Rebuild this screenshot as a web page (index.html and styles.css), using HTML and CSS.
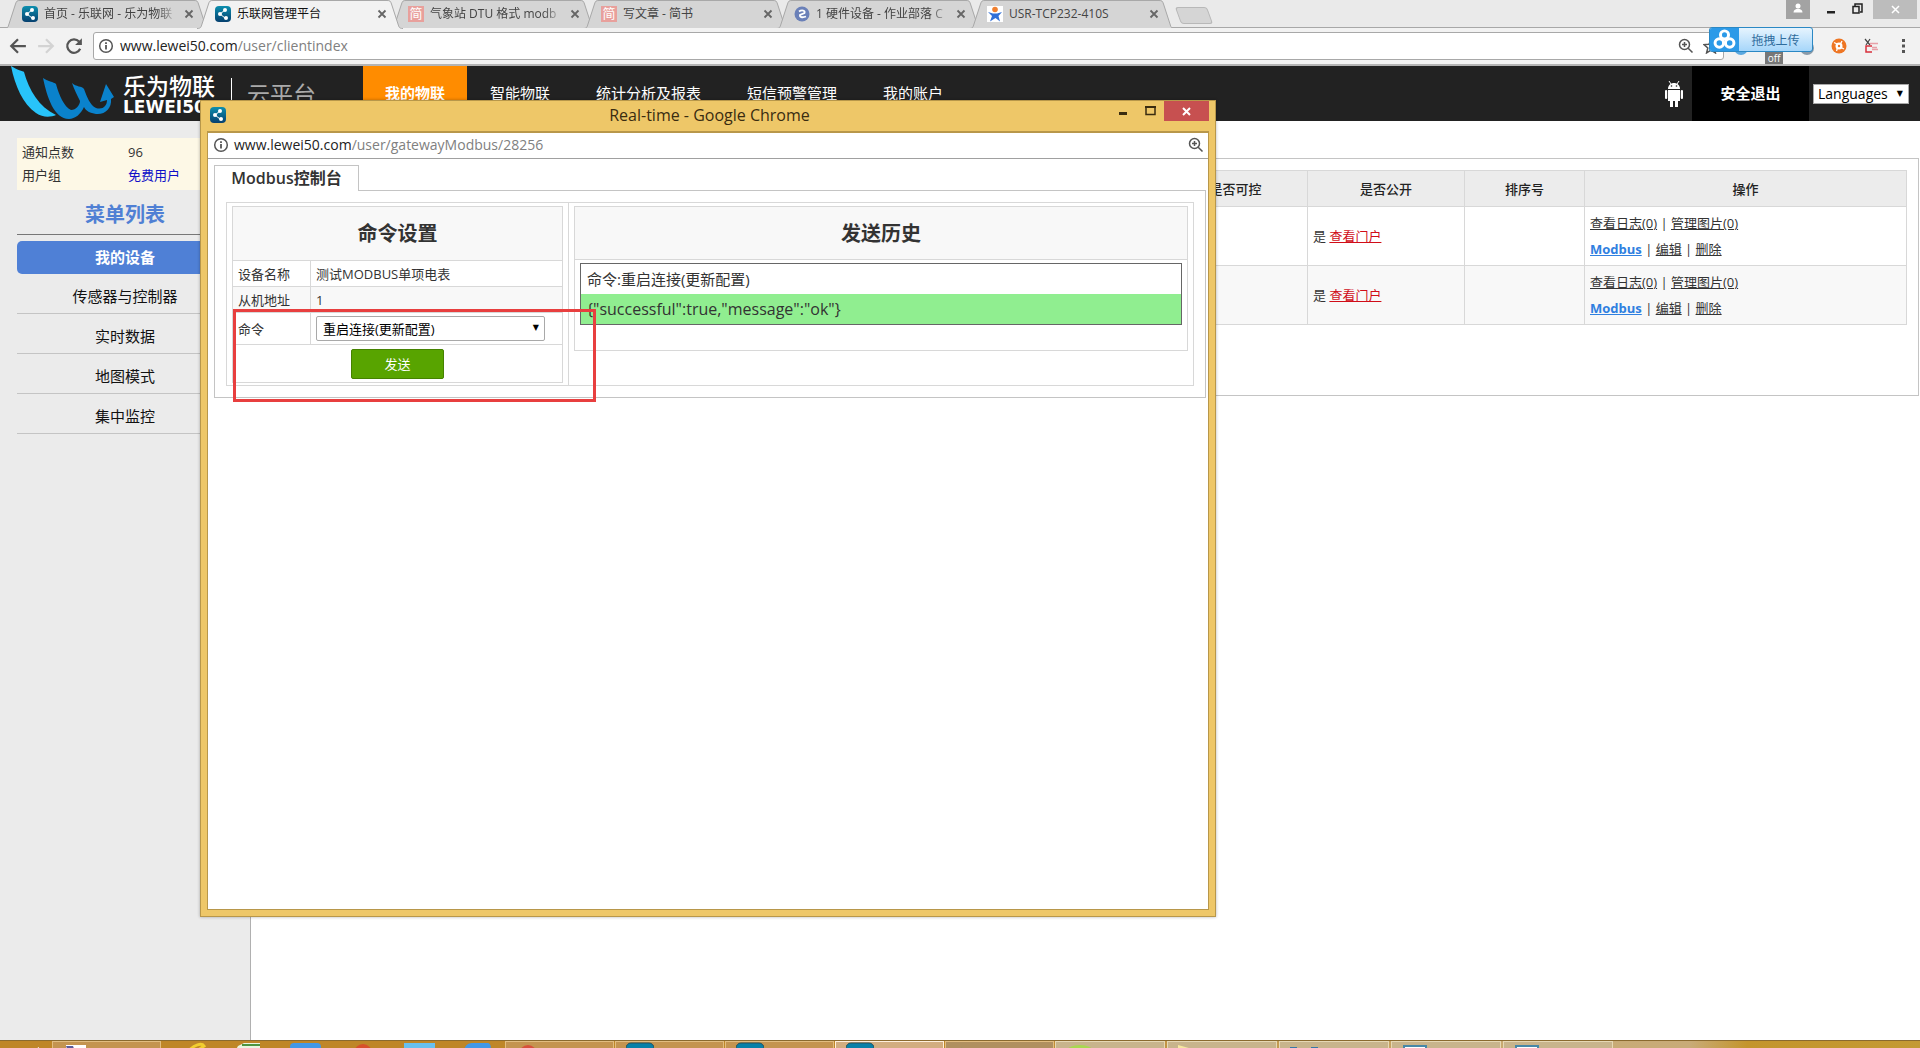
FILE: index.html
```html
<!DOCTYPE html>
<html lang="zh-CN">
<head>
<meta charset="utf-8">
<title>乐联网管理平台</title>
<link rel="stylesheet" href="styles.css">
</head>
<body>
<svg class="defs" aria-hidden="true">
  <defs>
    <linearGradient id="teal" x1="0" y1="0" x2="0" y2="1"><stop offset="0" stop-color="#0d8fae"/><stop offset="1" stop-color="#06406f"/></linearGradient>
    <symbol id="fav" viewBox="0 0 16 16"><rect width="16" height="16" rx="4" fill="url(#teal)"/><path d="M10 4L5 8l5 4" fill="none" stroke="#fff" stroke-width="1"/><circle cx="5" cy="8" r="2" fill="#fff"/><circle cx="10" cy="4" r="2" fill="#fff"/><circle cx="11" cy="12" r="2" fill="#fff"/></symbol>
    <symbol id="info" viewBox="0 0 16 16"><circle cx="8" cy="8" r="6.3" fill="none" stroke="#555" stroke-width="1.5"/><path d="M7.1 7h1.8v4.5H7.1zM7.1 4.2h1.8V6H7.1z" fill="#555"/></symbol>
    <symbol id="zoomin" viewBox="0 0 16 16"><path d="M10.2 10.2L14.5 14.5M4 6.5h5M6.500 4v5" fill="none" stroke="#555" stroke-width="1.500"/><circle cx="6.500" cy="6.500" r="5" fill="none" stroke="#555" stroke-width="1.500"/></symbol>
    <symbol id="x" viewBox="0 0 10 10"><path d="M1.500 1.500l7 7M8.500 1.500l-7 7" stroke="#666" stroke-width="1.800"/></symbol>
    <symbol id="tabshape" viewBox="0 0 206 29"><path d="M0 28.500C4 28.500 4 27 5 24L11.500 4C12.500 1 13 .5 16 .5H190C193 .5 193.500 1 194.500 4L201 24C202 27 202 28.500 206 28.500"/></symbol>
  </defs>
</svg>

<header class="chrome">
  <div class="strip">
    <div class="tabs">
      <div class="tab"><svg class="shape"><use href="#tabshape"/></svg><svg class="ico"><use href="#fav"/></svg><span class="label fade">首页 - 乐联网 - 乐为物联</span><button class="tab-x" aria-label="关闭"><svg><use href="#x"/></svg></button></div>
      <div class="tab active"><svg class="shape"><use href="#tabshape"/></svg><svg class="ico"><use href="#fav"/></svg><span class="label">乐联网管理平台</span><button class="tab-x" aria-label="关闭"><svg><use href="#x"/></svg></button></div>
      <div class="tab"><svg class="shape"><use href="#tabshape"/></svg><span class="ico jian">简</span><span class="label fade">气象站 DTU 格式 modb</span><button class="tab-x" aria-label="关闭"><svg><use href="#x"/></svg></button></div>
      <div class="tab"><svg class="shape"><use href="#tabshape"/></svg><span class="ico jian">简</span><span class="label">写文章 - 简书</span><button class="tab-x" aria-label="关闭"><svg><use href="#x"/></svg></button></div>
      <div class="tab"><svg class="shape"><use href="#tabshape"/></svg><svg class="ico" viewBox="0 0 16 16"><circle cx="8" cy="8" r="7.500" fill="#6a80b8"/><path d="M5 5.500C8 3.500 11.500 4.500 10.500 7L6 9C5.500 11 8 12 12 10.500" fill="none" stroke="#fff" stroke-width="1.800"/></svg><span class="label fade">1 硬件设备 - 作业部落 C</span><button class="tab-x" aria-label="关闭"><svg><use href="#x"/></svg></button></div>
      <div class="tab"><svg class="shape"><use href="#tabshape"/></svg><svg class="ico" viewBox="0 0 16 16"><path fill="#fff" d="M0 0h16v16H0z"/><circle cx="8" cy="3.500" r="2.800" fill="#f08030"/><path d="M1 6l5 1.500h4L15 6l-3.500 4L13 15.500 8.500 12 3 15.500 5 10z" fill="#3070d8"/></svg><span class="label">USR-TCP232-410S</span><button class="tab-x" aria-label="关闭"><svg><use href="#x"/></svg></button></div>
    </div>
    <button class="newtab" aria-label="新标签页"></button>
    <div class="wincontrols">
      <button class="user" aria-label="用户"><svg viewBox="0 0 24 19"><circle cx="12" cy="6" r="2.500" fill="#fff"/><path d="M7.500 12.500c0-5 9-5 9 0z" fill="#fff"/></svg></button>
      <button aria-label="最小化"><svg viewBox="0 0 26 19"><path d="M6 11h8v2.500H6z" fill="#222"/></svg></button>
      <button aria-label="还原"><svg viewBox="0 0 26 19"><path d="M6 6.500h6v6.500H6zM8 6V4h7v8h-2" fill="none" stroke="#222" stroke-width="1.500"/></svg></button>
      <button class="close" aria-label="关闭窗口"><svg viewBox="0 0 44 19"><path d="M19 6l7 7M26 6l-7 7" stroke="#fff" stroke-width="1.500"/></svg></button>
    </div>
  </div>
  <div class="toolbar">
    <button class="nav" aria-label="后退"><svg viewBox="0 0 16 16"><path d="M15 8H2M8 2L2 8l6 6" fill="none" stroke="#555" stroke-width="2"/></svg></button>
    <button class="nav" aria-label="前进"><svg viewBox="0 0 16 16"><path d="M1 8h13M8 2l6 6-6 6" fill="none" stroke="#d3d3d3" stroke-width="2"/></svg></button>
    <button class="nav" aria-label="刷新"><svg viewBox="0 0 16 16"><path d="M13.500 10.500A6 6 0 1 1 12.500 4" fill="none" stroke="#555" stroke-width="2"/><path d="M15 1v6H9z" fill="#555"/></svg></button>
    <div class="omnibox">
      <svg class="ico"><use href="#info"/></svg>
      <span class="url">www.lewei50.com<i>/user/clientindex</i></span>
      <svg class="ico"><use href="#zoomin"/></svg>
      <svg class="ico star" viewBox="0 0 16 16"><path d="M8 1.500l2 4.700 5 .4-3.800 3.300 1.200 5L8 12.200l-4.400 2.700 1.200-5L1 6.600l5-.4z" fill="none" stroke="#555" stroke-width="1.500"/></svg>
    </div>
    <div class="exts">
      <svg class="ico low" viewBox="0 0 16 16"><circle cx="8" cy="8" r="7" fill="#5aa8e0"/></svg>
      <span class="off">off</span>
      <svg class="ico low" viewBox="0 0 16 16"><circle cx="8" cy="8" r="7" fill="#8a9aa8"/></svg>
      <svg class="ico" viewBox="0 0 16 16"><circle cx="8" cy="8" r="7.500" fill="#ee7624"/><circle cx="8" cy="8" r="3.500" fill="#fff"/><circle cx="8" cy="8" r="1.200" fill="#ee7624"/><path d="M3 4.500l3 1.500M11 3L9.500 6M13 11l-3-1.500M5.500 13l1-3" stroke="#fff" stroke-width="1.300"/></svg>
      <svg class="ico" viewBox="0 0 16 16"><path d="M2 1l5 6M7 1L3 7" stroke="#444" stroke-width="1.200"/><path d="M7 5.500h8M9 11.500h6M9 9.500h5" stroke="#e8a0a8" stroke-width="1.500"/><path d="M9 8H3v6h6" fill="none" stroke="#d8303c" stroke-width="1.500"/></svg>
      <svg class="ico" viewBox="0 0 16 16"><path d="M7 1h3v3H7zM7 6.500h3v3H7zM7 12h3v3H7z" fill="#555"/></svg>
    </div>
    <button class="upload"><span class="pan"><svg viewBox="0 0 24 20"><g fill="none" stroke="#fff" stroke-width="2.600"><circle cx="12" cy="6" r="3.500"/><circle cx="7.500" cy="13" r="3.700"/><circle cx="16.500" cy="13" r="3.700"/></g></svg></span><span class="uptext">拖拽上传</span></button>
  </div>
</header>

<div class="site-head">
  <svg class="logo" viewBox="0 0 110 55"><path d="M6 0C12 4 18 5 19 6C24 24 34 41 51 49C46 51 38 52 31 47C18 38 10 20 6 0z" fill="#28c4fa"/><path d="M38 12C42 15 49 16 51 18C54 29 59 41 66 44C71 44 75 39 75 35C72 29 69 23 67 17C71 21 77 20 79 23C82 31 85 39 91 42C98 44 102 40 102 34L95 36L101 18L109 31L106 33C107 42 100 49 91 48C85 47 81 45 79 41C76 48 70 53 64 53C49 53 42 31 38 12z" fill="#0a82cc"/></svg>
  <div class="brand"><b>乐为物联</b><em>LEWEI50</em></div>
  <div class="cloud">云平台</div>
  <nav class="mainnav"><a class="on" href="#">我的物联</a><a href="#">智能物联</a><a href="#">统计分析及报表</a><a href="#">短信预警管理</a><a href="#">我的账户</a></nav>
  <svg class="android" viewBox="0 0 18 28"><path d="M4 1l2 3M14 1l-2 3" stroke="#fff"/><path d="M3 9c0-8 12-8 12 0z" fill="#fff"/><circle cx="6.500" cy="6" r=".8" fill="#222"/><circle cx="11.500" cy="6" r=".8" fill="#222"/><path d="M3 10h12v11H3zM5 20h3v7H5zM10 20h3v7h-3z" fill="#fff"/><rect y="10" width="2.200" height="9" rx="1" fill="#fff"/><rect x="15.800" y="10" width="2.200" height="9" rx="1" fill="#fff"/></svg>
  <a class="logout" href="#">安全退出</a>
  <span class="selwrap lang"><select aria-label="Languages"><option>Languages</option></select></span>
</div>

<div class="main">
  <aside class="side">
    <dl class="account"><dt>通知点数</dt><dd>96</dd><dt>用户组</dt><dd><a href="#">免费用户</a></dd></dl>
    <h2>菜单列表</h2>
    <ul><li><a class="cur" href="#">我的设备</a></li><li><a href="#">传感器与控制器</a></li><li><a href="#">实时数据</a></li><li><a href="#">地图模式</a></li><li><a href="#">集中监控</a></li></ul>
  </aside>
  <main class="content">
    <div class="panel">
      <table class="devices">
        <colgroup><col><col class="c1"><col class="c2"><col class="c3"><col class="c4"></colgroup>
        <thead><tr><th></th><th>是否可控</th><th>是否公开</th><th>排序号</th><th>操作</th></tr></thead>
        <tbody>
          <tr><td></td><td></td><td>是 <a class="red" href="#">查看门户</a></td><td></td><td><a href="#">查看日志(0)</a> | <a href="#">管理图片(0)</a><br><a class="mb" href="#">Modbus</a> | <a href="#">编辑</a> | <a href="#">删除</a></td></tr>
          <tr><td></td><td></td><td>是 <a class="red" href="#">查看门户</a></td><td></td><td><a href="#">查看日志(0)</a> | <a href="#">管理图片(0)</a><br><a class="mb" href="#">Modbus</a> | <a href="#">编辑</a> | <a href="#">删除</a></td></tr>
        </tbody>
      </table>
    </div>
  </main>
</div>

<footer class="taskbar">
  <i class="gap"><svg viewBox="0 0 52 12"><path d="M34 9l5-3v6h-5z" fill="#fff"/></svg></i>
  <span class="task t1"><svg viewBox="0 0 22 12"><path d="M0 3h20v9H0z" fill="#fff"/><path d="M0 4h7l3 8H3z" fill="#5a5a9a"/></svg></span>
  <span class="pins"><svg viewBox="0 0 340 12"><path d="M26 11C32 3 40 2 42 5L32 12" fill="none" stroke="#f2ce30" stroke-width="3"/><path d="M76 5l6-3h16v10H72z" fill="#e8f4e0"/><path d="M80 3h18v2H80z" fill="#4c9440"/><rect x="128" y="2" width="31" height="14" rx="4" fill="#4298e8"/><circle cx="201" cy="12" r="9" fill="#d8502c"/><path d="M242 2h31v10h-31z" fill="#68c0f0"/><path d="M301 12c2-9 6-10 10-10h14c4 0 4 3 4 10z" fill="#4298e8"/></svg></span>
  <span class="task"><svg viewBox="0 0 28 12"><circle cx="12" cy="12" r="9" fill="#d8503c"/></svg></span>
  <span class="task"><svg viewBox="0 0 28 12"><rect y="1" width="28" height="16" rx="5" fill="#0880a8" stroke="#26505c"/></svg></span>
  <span class="task"><svg viewBox="0 0 28 12"><rect y="1" width="28" height="16" rx="5" fill="#0880a8" stroke="#26505c"/></svg></span>
  <span class="task sel"><svg viewBox="0 0 28 12"><rect y="1" width="28" height="16" rx="5" fill="#0880a8" stroke="#26505c"/></svg></span>
  <span class="task dark"><svg viewBox="0 0 28 12"><path d="M5 5l12 7H6z" fill="#9c9468"/></svg></span>
  <span class="task pale"><svg viewBox="0 0 28 12"><ellipse cx="14" cy="9" rx="13" ry="6" fill="#a8d850"/></svg></span>
  <span class="task pale"><svg viewBox="0 0 28 12"><path d="M0 3l18 5v4H0z" fill="#f6e8a0"/></svg></span>
  <span class="task pale"><svg viewBox="0 0 28 12"><path d="M0 5h7v7H0zM21 5h7v7h-7z" fill="#3878a8"/></svg></span>
  <span class="task pale"><svg viewBox="0 0 28 12"><path d="M2 4h22v9H2z" fill="#fff" stroke="#4888a8" stroke-width="2"/></svg></span>
  <span class="task pale"><svg viewBox="0 0 28 12"><path d="M2 4h22v9H2z" fill="#fff" stroke="#4888a8" stroke-width="2"/></svg></span>
  <span class="clock">17:00</span>
</footer>

<section class="popup" aria-label="Real-time">
  <div class="ptitle"><svg class="ico"><use href="#fav"/></svg><span>Real-time - Google Chrome</span>
    <div class="pctl"><button aria-label="最小化"><svg viewBox="0 0 26 20"><path d="M7 11h8v3H7z" fill="#3a2c10"/></svg></button><button aria-label="最大化"><svg viewBox="0 0 26 20"><path d="M8 6h9v7.500H8z" fill="none" stroke="#3a2c10" stroke-width="1.500"/><path d="M7 5h11v2H7z" fill="#3a2c10"/></svg></button><button class="pclose" aria-label="关闭"><svg viewBox="0 0 45 20"><path d="M19 7l7 7M26 7l-7 7" stroke="#fff" stroke-width="2"/></svg></button></div>
  </div>
  <div class="pbody">
    <div class="paddr"><svg class="ico"><use href="#info"/></svg><span class="url">www.lewei50.com<i>/user/gatewayModbus/28256</i></span><svg class="ico"><use href="#zoomin"/></svg></div>
    <div class="console">
      <h1 class="ctab">Modbus控制台</h1>
      <div class="pane">
        <div class="split">
          <div class="cell left">
            <table class="form">
              <colgroup><col class="k"><col></colgroup>
              <thead><tr><th colspan="2">命令设置</th></tr></thead>
              <tbody>
                <tr><td>设备名称</td><td>测试MODBUS单项电表</td></tr>
                <tr class="alt"><td>从机地址</td><td>1</td></tr>
                <tr class="cmd"><td><label for="cmd">命令</label></td><td><span class="selwrap cmdsel"><select id="cmd"><option>重启连接(更新配置)</option></select></span></td></tr>
                <tr class="send"><td colspan="2"><button>发送</button></td></tr>
              </tbody>
            </table>
          </div>
          <div class="cell right">
            <div class="history">
              <h2>发送历史</h2>
              <div class="log"><p>命令:重启连接(更新配置)</p><p class="ok">{"successful":true,"message":"ok"}</p></div>
            </div>
          </div>
        </div>
      </div>
      <div class="mark"></div>
    </div>
  </div>
</section>
</body>
</html>
```
FILE: styles.css
```css
* { box-sizing: border-box; }
body {
  margin: 0;
  min-height: 100vh;
  display: flex;
  flex-direction: column;
  position: relative;
  background: #fff;
  color: #333;
  font: 13px/20px "Open Sans", "Noto Sans CJK SC", sans-serif;
}
button { border: 0; padding: 0; background: none; font: inherit; display: block; }
svg { display: block; }
a { color: inherit; }
.defs { position: absolute; width: 0; height: 0; }
.ico { width: 16px; height: 16px; flex: none; }

/* Browser frame */
.strip { display: flex; height: 28px; background: #eaeaea; border-bottom: 1px solid #a8a8a8; }
.tabs { display: flex; padding-left: 4px; }
.tab { position: relative; display: flex; align-items: center; width: 193px; height: 28px; padding: 0 0 0 18px; gap: 6px; font-size: 12px; color: #444; }
.shape { position: absolute; left: 0; top: 0; width: 206px; height: 29px; fill: #d5d5d5; stroke: #a8a8a8; }
.active { z-index: 1; color: #111; }
.active .shape { fill: #f2f2f2; }
.tab > :not(.shape) { position: relative; }
.label { width: 134px; overflow: hidden; white-space: nowrap; }
.fade { -webkit-mask-image: linear-gradient(90deg, #000 85%, transparent 100%); mask-image: linear-gradient(90deg, #000 85%, transparent 100%); }
.tab-x, .tab-x svg { width: 10px; height: 10px; }
.jian { background: #e8a09c; color: #fff; font-size: 13px; line-height: 15px; text-align: center; }
.newtab { width: 32px; height: 17px; margin: 7px 0 0 16px; background: #d5d5d5; border: 1px solid #b8b8b8; border-radius: 3px; transform: skewX(20deg); }
.wincontrols { display: flex; margin-left: auto; padding-right: 3px; height: 19px; }
.wincontrols button { width: 26px; }
.wincontrols svg { height: 19px; }
.wincontrols .user { width: 24px; margin-right: 11px; background: #a3a3a3; }
.wincontrols .close { width: 44px; background: #bcbcbc; }
.toolbar { position: relative; display: flex; align-items: center; height: 38px; padding: 0 9px; background: #f2f2f2; border-bottom: 2px solid #b4b4b4; }
.nav { width: 28px; }
.nav svg { width: 18px; height: 18px; }
.omnibox { flex: 1; display: flex; align-items: center; height: 28px; padding: 0 4px; gap: 9px; background: #fff; border: 1px solid #a8a8a8; border-radius: 3px; }
.url { flex: 1; font-size: 14px; color: #222; margin-left: -3px; }
.url i { font-style: normal; color: #808080; }
.exts { width: 187px; display: flex; align-items: center; justify-content: flex-end; gap: 16px; }
.low { margin-top: 4px; }
.off { width: 18px; margin-top: 24px; background: #777; color: #fff; font-size: 10px; line-height: 12px; text-align: center; }
.upload { position: absolute; right: 107px; top: -1px; width: 104px; height: 25px; display: flex; border: 1px solid #2b88c4; border-radius: 3px; overflow: hidden; background: linear-gradient(#e6f4fe, #a6d6fa); color: #2f6c9c; font-size: 12px; line-height: 25px; }
.pan { width: 29px; background: #2c9ae8; }
.pan svg { width: 29px; height: 23px; }
.uptext { flex: 1; text-align: center; }

/* Site header */
.site-head { display: flex; align-items: center; height: 55px; background: #222; color: #fff; font-size: 15px; }
.logo { width: 110px; height: 55px; margin-left: 5px; }
.brand { width: 108px; margin-left: 8px; padding-top: 3px; }
.brand b { display: block; font-size: 23px; line-height: 24px; font-weight: 500; }
.brand em { display: block; font: bold 17px/18px "DejaVu Sans", sans-serif; }
.cloud { align-self: flex-start; width: 132px; height: 32px; margin-top: 12px; padding: 0 0 0 15px; border-left: 1px solid #fff; color: #aaa; font-size: 23px; line-height: 32px; }
.mainnav { display: flex; flex: 1; }
.mainnav a { padding: 0 23px; line-height: 55px; color: #fff; text-decoration: none; }
.mainnav .on { padding: 0 22px; background: #ff8c00; font-weight: bold; }
.android { width: 18px; height: 28px; margin-right: 9px; }
.logout { width: 117px; line-height: 55px; background: #000; color: #fff; font-weight: bold; text-align: center; text-decoration: none; }
.selwrap { position: relative; display: block; }
.selwrap::after { content: "▼"; position: absolute; right: 6px; top: 0; font: 8px/20px "DejaVu Sans", sans-serif; color: #000; pointer-events: none; }
select { appearance: none; width: 100%; margin: 0; border: 1px solid #a9a9a9; background: #fff; color: #000; font: inherit; display: block; }
.lang { width: 96px; margin: 0 11px 0 4px; }
.lang select { height: 20px; padding: 0 4px; font-size: 14px; line-height: 18px; }

/* Page body */
.main { flex: 1; display: flex; }
.side { width: 251px; flex: none; padding: 17px 17px 0; background: #ebebeb; border-right: 1px solid #b0b0b0; }
.account { display: grid; grid-template-columns: 106px 1fr; margin: 0; padding: 3px 5px; background: #fdf8e6; line-height: 23px; }
.account dd { margin: 0; }
.account a { color: #1010c8; text-decoration: none; }
.side h2 { margin: 0 0 6px; padding: 5px 0 0; border-bottom: 1px solid #777; color: #5080d4; font-size: 20px; line-height: 39px; text-align: center; }
.side ul { margin: 0; padding: 0; list-style: none; }
.side li a { display: block; height: 40px; border-bottom: 1px solid #c4c4c4; color: #111; font-size: 15px; line-height: 44px; text-align: center; text-decoration: none; }
.side li .cur { height: 33px; border: 0; border-radius: 5px; background: #4f80d6; color: #fff; font-weight: bold; line-height: 33px; }
.content { flex: 1; padding-top: 37px; }
.panel { height: 238px; margin-right: 1px; padding: 11px; border: 1px solid #c4c4c4; }
.devices { width: 100%; table-layout: fixed; border-collapse: collapse; }
.devices .c1 { width: 144px; }
.devices .c2 { width: 157px; }
.devices .c3 { width: 120px; }
.devices .c4 { width: 322px; }
.devices th { height: 36px; background: #ececec; font-weight: 500; color: #222; }
.devices th, .devices td { border: 1px solid #d8d8d8; padding: 0 5px; }
.devices td { height: 59px; line-height: 26px; }
.devices tr:nth-child(2) td { background: #f8f8f8; }
.devices .red { color: #d00d18; }
.devices .mb { color: #2f80e0; font-weight: bold; }

/* Taskbar */
.taskbar { display: flex; height: 8px; overflow: hidden; border-top: 1px solid #8a6a30; background: linear-gradient(90deg, #bf8628 0, #bf8628 50%, #c8ab74 80%, #c8ab78 88%, #c4952c 91%, #c49a34 100%); }
.gap { width: 52px; }
.task { width: 109px; height: 12px; margin-right: 1px; padding-left: 10px; border: 1px solid #e2bd80; background: #c49450; }
.task svg { width: 28px; height: 12px; }
.pins { width: 343px; }
.pins svg { width: 340px; height: 12px; }
.sel { background: #d2ad80; border-color: #fff0dc; }
.dark { background: #b09060; }
.pale { width: 110px; margin-right: 2px; background: #c8b48c; border-color: #e6d8b4; }
.clock { margin: 3px 37px 0 auto; color: #fff; font-size: 11px; line-height: 16px; }

/* Pop-up browser window */
.popup { position: absolute; left: 200px; top: 100px; width: 1016px; height: 817px; padding: 0 6px 7px; background: #eec768; border: 1px solid #b8974a; box-shadow: 0 0 3px rgba(0, 0, 0, .3); }
.ptitle { display: flex; align-items: center; height: 30px; padding: 0 0 2px 3px; color: #3a2c10; font-size: 16px; }
.ptitle span { flex: 1; padding-left: 81px; text-align: center; }
.pctl { display: flex; align-self: flex-start; }
.pctl svg { height: 20px; }
.pctl button { width: 26px; }
.pctl .pclose { width: 45px; background: #c75050; }
.pbody { height: 779px; background: #fff; border: 1px solid #b8974a; border-top-width: 2px; }
.paddr { display: flex; align-items: center; height: 26px; gap: 8px; padding: 0 4px 2px 5px; border-bottom: 1px solid #a0a0a0; }
.console { position: relative; padding: 6px 2px 0 6px; }
.ctab { position: relative; width: 145px; height: 26px; margin: 0 0 -1px; border: 1px solid #c4c4c4; border-bottom: 0; background: #fff; font-size: 16px; line-height: 24px; text-align: center; font-weight: 600; }
.pane { padding: 11px; border: 1px solid #c4c4c4; }
.split { display: flex; height: 184px; border: 1px solid #d8d8d8; }
.cell { padding: 3px 5px; }
.left { width: 342px; border-right: 1px solid #d8d8d8; }
.right { flex: 1; }
.form { width: 100%; table-layout: fixed; border-collapse: collapse; }
.form .k { width: 78px; }
.form th, .history h2 { height: 53px; background: #f8f8f8; font-size: 20px; line-height: 53px; }
.form th, .form td { border: 1px solid #d8d8d8; padding: 0 5px; }
.form td { height: 26px; line-height: 24px; }
.form .alt td { background: #f8f8f8; }
.form .cmd td { height: 32px; }
.form .send td { height: 38px; }
.send button { width: 93px; height: 30px; margin: 0 auto; background: #58a400; border: 1px solid #458200; border-radius: 2px; color: #fff; }
.cmdsel { width: 229px; }
.cmdsel::after { line-height: 24px; }
.cmdsel select { height: 25px; padding: 0 6px; border-radius: 2px; }
.history { height: 145px; border: 1px solid #d8d8d8; }
.history h2 { margin: 0; border-bottom: 1px solid #d8d8d8; text-align: center; }
.log { margin: 3px 5px; border: 1px solid #666; font-size: 15px; line-height: 30px; }
.log p { margin: 0; padding: 0 6px; height: 30px; }
.log .ok { background: #90ee90; font-size: 16px; }
.mark { position: absolute; left: 25px; top: 150px; width: 363px; height: 93px; border: 3px solid #e83f3f; }
```
